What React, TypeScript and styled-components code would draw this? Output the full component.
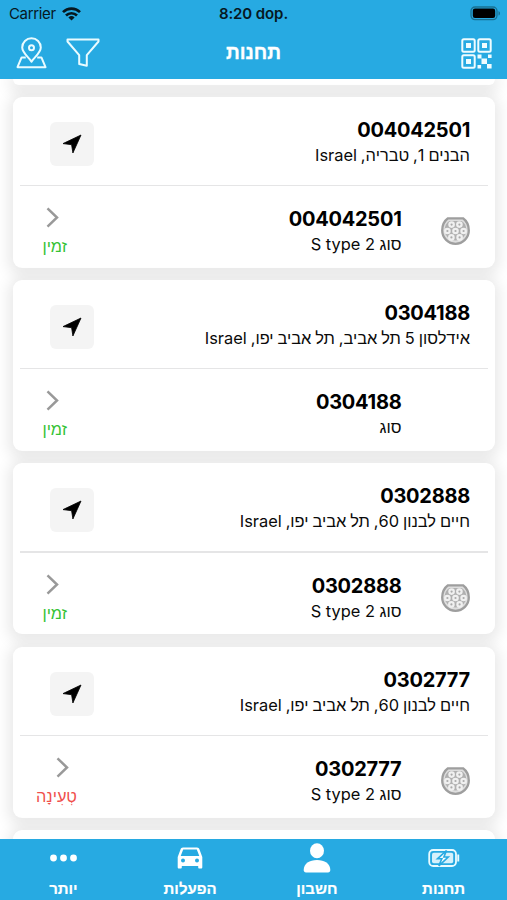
import React from "react";
import styled, { createGlobalStyle } from "styled-components";

const Global = createGlobalStyle`
  * { box-sizing: border-box; }
  html, body { margin: 0; padding: 0; background: #fff; }
  body { font-family: Inter, "Liberation Sans", sans-serif; color: #000; }
  svg { display: block; flex: none; }
`;

const Screen = styled.div`
  width: 507px;
  height: 900px;
  overflow: hidden;
  display: flex;
  flex-direction: column;
  direction: rtl;
  background: #fff;
`;

const Header = styled.header`
  height: 79px;
  flex: none;
  background: #27aae2;
  direction: ltr;
`;

const StatusBar = styled.div`
  height: 27px;
  display: grid;
  grid-template-columns: 1fr auto 1fr;
  align-items: center;
  padding: 0 6px 0 9px;
  color: #06181f;
`;

const Carrier = styled.div`
  display: flex;
  align-items: center;
  gap: 6px;
  font-size: 15px;
  letter-spacing: -0.35px;
`;

const Clock = styled.div`
  margin-right: 3px;
  font-size: 15px;
  font-weight: 600;
  letter-spacing: -0.1px;
`;

const Battery = styled.div`
  display: flex;
  justify-content: flex-end;
`;

const NavBar = styled.div`
  height: 52px;
  display: grid;
  grid-template-columns: 1fr auto 1fr;
  align-items: center;
  padding: 0 15px 0 16px;
`;

const NavIcons = styled.div`
  display: flex;
  gap: 19px;
`;

const NavTitle = styled.h1`
  margin: 0 1px 0 0;
  color: #fff;
  font: 700 19.2px/24px "Liberation Sans", sans-serif;
  -webkit-text-stroke: 0.3px #fff;
`;

const NavEnd = styled.div`
  display: flex;
  justify-content: flex-end;
`;

const List = styled.main`
  height: 759.5px;
  flex: none;
  overflow: hidden;
  padding: 0 12.5px 0 13px;
  display: flex;
  flex-direction: column;
  gap: 12.3px;
`;

const Card = styled.article`
  height: 171px;
  flex: none;
  border-radius: 9px;
  background: #fff;
  box-shadow: 0 3px 14px 5px rgba(0, 0, 0, 0.085);
`;

const CardTail = styled(Card)`
  height: 5.5px;
  border-radius: 0 0 9px 9px;
`;

const Station = styled.div`
  height: 88px;
  display: flex;
  justify-content: space-between;
  padding: 21px 24.5px 0 37px;
`;

const Connector = styled.div`
  height: 82px;
  display: flex;
  padding: 21px 24.5px 0 0;
`;

const Rule = styled.div`
  height: 1.3px;
  margin: 0 7px;
  background: #e5e5e6;
`;

const Texts = styled.div`
  display: flex;
  flex-direction: column;
`;

const Code = styled.div`
  font-size: 20px;
  font-weight: 700;
  line-height: 24px;
  letter-spacing: -0.25px;
`;

const Detail = styled.div`
  font-size: 16.4px;
  line-height: 24px;
  margin-top: 1px;
  white-space: nowrap;
  color: #0a0a0a;
`;

const Address = styled(Detail)`
  word-spacing: -0.7px;
`;

const DirectionsButton = styled.button`
  width: 44px;
  height: 44px;
  margin: 4px 0 0;
  padding: 0;
  border: 0;
  border-radius: 6px;
  background: #f4f4f4;
  display: grid;
  place-items: center;
`;

const PlugSlot = styled.div`
  width: 29px;
  margin-left: 39.5px;
  padding-top: 10px;
`;

const Status = styled.div<{ $busy?: boolean }>`
  width: ${(p) => (p.$busy ? 40 : 26)}px;
  margin-right: auto;
  margin-left: ${(p) => (p.$busy ? 24 : 28)}px;
  display: flex;
  flex-direction: column;
  align-items: flex-start;
  font-size: 16.3px;
  line-height: 20px;
  white-space: nowrap;
  color: ${(p) => (p.$busy ? "#f0504c" : "#34c234")};

  svg { margin: 0 8px 8px 0; }
`;

const TabBar = styled.nav`
  flex: 1;
  background: #27aae2;
  display: grid;
  grid-template-columns: repeat(4, 1fr);
`;

const Tab = styled.div`
  display: flex;
  flex-direction: column;
  align-items: center;
  color: #fff;
  font: 700 15px/22px "Liberation Sans", sans-serif;
  -webkit-text-stroke: 0.2px #fff;
`;

const TabIcon = styled.div`
  height: 39px;
  display: grid;
  place-items: center;
`;

const WifiIcon = () => (
  <svg width="19" height="14" viewBox="0 0 19 14" fill="none" stroke="#06181f" strokeWidth="2.7">
    <path d="M1 5.1a12.2 12.2 0 0 1 17 0" />
    <path d="M4 8.5a7.9 7.9 0 0 1 11 0" />
    <path d="M9.5 13.6 6.4 10.5a4.5 4.5 0 0 1 6.2 0z" fill="#06181f" stroke="none" />
  </svg>
);

const BatteryIcon = () => (
  <svg width="31" height="15" viewBox="0 0 31 15">
    <rect x="1" y="1" width="26" height="12.6" rx="4" fill="none" stroke="#197193" strokeWidth="1.3" />
    <rect x="2.8" y="2.6" width="22.4" height="9.4" rx="2.2" fill="#000" />
    <path d="M28.5 5v4.6c2-.8 2-3.8 0-4.6z" fill="#197193" />
  </svg>
);

const MapPinIcon = () => (
  <svg width="31" height="32" viewBox="0 0 31 32" fill="none" stroke="#e9fbff" strokeWidth="2" strokeLinejoin="round">
    <path d="M15.5 24.6C13 20.6 6.2 15.8 6.2 10.5a9.3 9.3 0 0 1 18.6 0c0 5.3-6.8 10.1-9.3 14.1z" />
    <circle cx="15.5" cy="10.7" r="2.5" />
    <path d="M9.8 20.4H5.6L1.5 30.2h28L25.4 20.4h-4.2" />
  </svg>
);

const FunnelIcon = () => (
  <svg width="34" height="32" viewBox="0 0 34 32" fill="none" stroke="#e9fbff" strokeWidth="2" strokeLinejoin="round">
    <path d="M1.5 2.5H32.5V4.5L20.8 18.2V28.8L13.2 27V18.2L1.5 4.5z" />
  </svg>
);

const QrIcon = () => (
  <svg width="31" height="31" viewBox="0 0 31 31" fill="#effcff">
    <g fill="none" stroke="#effcff" strokeWidth="2">
      <rect x="1.3" y="1.3" width="12.4" height="12.4" rx="1.5" />
      <rect x="17.3" y="1.3" width="12.4" height="12.4" rx="1.5" />
      <rect x="1.3" y="17.3" width="12.4" height="12.4" rx="1.5" />
    </g>
    <path d="M5 5h5v5H5zM21 5h5v5h-5zM5 21h5v5H5zM16.5 16.5h4v4h-4zM27 16.5h3.6v3.4H27zM20.5 20.5h5.5v5.5h-5.500zM16.5 27h3.600v3.600h-3.600zM26 26h4.600v4.600H26z" />
  </svg>
);

const ArrowIcon = () => (
  <svg width="20" height="20" viewBox="0 0 20 20">
    <path d="M19 1 10.9 19 9.6 10.7 1 9.6z" fill="#000" stroke="#000" strokeWidth=".8" strokeLinejoin="round" />
  </svg>
);

const ChevronIcon = () => (
  <svg width="13" height="21" viewBox="0 0 13 21" fill="none" stroke="#999" strokeWidth="2.5">
    <path d="M1.500 1.300 11 10.500 1.500 19.700" />
  </svg>
);

const PINS = [[10.6, 7.6], [18.4, 7.6], [6.4, 14], [14.5, 14], [22.6, 14], [10.4, 20.4], [18.6, 20.4]];

const PlugIcon = () => (
  <svg width="29" height="28" viewBox="0 0 29 28">
    <path d="M7 1.3H22C26 4.2 27.8 8.5 27.8 13.5a13.3 13.3 0 0 1-26.6 0C1.2 8.5 3 4.2 7 1.3z" fill="#dedede" stroke="#9e9e9e" strokeWidth="2.3" />
    <path d="M8.200 4H20.800a10.800 10.800 0 1 1-12.600 0z" fill="#b0b0b0" />
    {PINS.map(([x, y]) => (
      <g key={`${x}-${y}`}>
        <circle cx={x} cy={y} r="3.3" fill="#f0f0f0" />
        <circle cx={x} cy={y} r="1.1" fill="#aaa" />
      </g>
    ))}
  </svg>
);

const DotsIcon = () => (
  <svg width="28" height="8" viewBox="0 0 28 8" fill="#fff">
    <circle cx="4.5" cy="4" r="3.4" /><circle cx="14.5" cy="4" r="3.4" /><circle cx="24.5" cy="4" r="3.4" />
  </svg>
);

const CarIcon = () => (
  <svg width="26" height="22" viewBox="0 0 26 22">
    <path fillRule="evenodd" fill="#fff" d="M6 .5H20c1.400 0 2 .7 2.400 1.800L25.300 10V20.300c0 .8-.5 1.200-1.200 1.200h-1.700c-.8 0-1.200-.4-1.200-1.200V19H4.800v1.300c0 .8-.4 1.200-1.200 1.200H1.900C1.200 21.500.7 21.100.7 20.300V10L3.600 2.300C4 1.200 4.600.5 6 .5zM6.200 2.500 3.700 9H22.300L19.800 2.500zM6 11.400a2 2 0 1 0 0 4 2 2 0 0 0 0-4zm14 0a2 2 0 1 0 0 4 2 2 0 0 0 0-4z" />
  </svg>
);

const PersonIcon = () => (
  <svg width="28" height="30" viewBox="0 0 28 30" fill="#fff">
    <ellipse cx="14" cy="7.8" rx="7" ry="7.5" />
    <path d="M.7 27C.7 20.5 6.5 17 14 17s13.3 3.5 13.3 10c0 1.5-.8 2.500-2.300 2.500H3C1.500 29.500.7 28.500.7 27z" />
  </svg>
);

const ChargeIcon = () => (
  <svg width="32" height="18" viewBox="0 0 32 18" fill="none">
    <rect x="1.2" y="1" width="26.8" height="16" rx="4" stroke="#e9fbff" strokeWidth="1.8" />
    <path d="M29.3 5.500h1.900v7h-1.900z" fill="#e9fbff" />
    <rect x="4" y="3.8" width="21.2" height="10.4" rx="1.8" fill="#d5f1fb" />
    <path d="M18.500 1.500 9.500 9.800h4.300L10.800 16.800 20.200 8h-4.300z" fill="#f6feff" stroke="#27aae2" strokeWidth="1.6" />
  </svg>
);

interface StationData {
  code: string;
  address: string;
  type: string;
  plug: boolean;
  status: string;
  busy?: boolean;
}

const STATIONS: StationData[] = [
  { code: "004042501", address: "הבנים 1, טבריה, Israel", type: "S type 2", plug: true, status: "זמין" },
  { code: "0304188", address: "אידלסון 5 תל אביב, תל אביב יפו, Israel", type: "", plug: false, status: "זמין" },
  { code: "0302888", address: "חיים לבנון 60, תל אביב יפו, Israel", type: "S type 2", plug: true, status: "זמין" },
  { code: "0302777", address: "חיים לבנון 60, תל אביב יפו, Israel", type: "S type 2", plug: true, status: "טְעִינָה", busy: true },
];

const StationCard = ({ code, address, type, plug, status, busy }: StationData) => (
  <Card>
    <Station>
      <Texts>
        <Code>{code}</Code>
        <Address>{address}</Address>
      </Texts>
      <DirectionsButton><ArrowIcon /></DirectionsButton>
    </Station>
    <Rule />
    <Connector>
      <PlugSlot>{plug && <PlugIcon />}</PlugSlot>
      <Texts>
        <Code>{code}</Code>
        <Detail>סוג <bdi>{type}</bdi></Detail>
      </Texts>
      <Status $busy={busy}>
        <ChevronIcon />
        {status}
      </Status>
    </Connector>
  </Card>
);

const TABS = [
  { label: "תחנות", icon: <ChargeIcon /> },
  { label: "חשבון", icon: <PersonIcon /> },
  { label: "הפעלות", icon: <CarIcon /> },
  { label: "יותר", icon: <DotsIcon /> },
];

export default function App() {
  return (
    <Screen>
      <Global />
      <Header>
        <StatusBar>
          <Carrier>Carrier <WifiIcon /></Carrier>
          <Clock>8:20 dop.</Clock>
          <Battery><BatteryIcon /></Battery>
        </StatusBar>
        <NavBar>
          <NavIcons><MapPinIcon /><FunnelIcon /></NavIcons>
          <NavTitle>תחנות</NavTitle>
          <NavEnd><QrIcon /></NavEnd>
        </NavBar>
      </Header>
      <List>
        <CardTail />
        {STATIONS.map((s) => <StationCard key={s.code} {...s} />)}
        <Card />
      </List>
      <TabBar>
        {TABS.map((t) => (
          <Tab key={t.label}>
            <TabIcon>{t.icon}</TabIcon>
            {t.label}
          </Tab>
        ))}
      </TabBar>
    </Screen>
  );
}
